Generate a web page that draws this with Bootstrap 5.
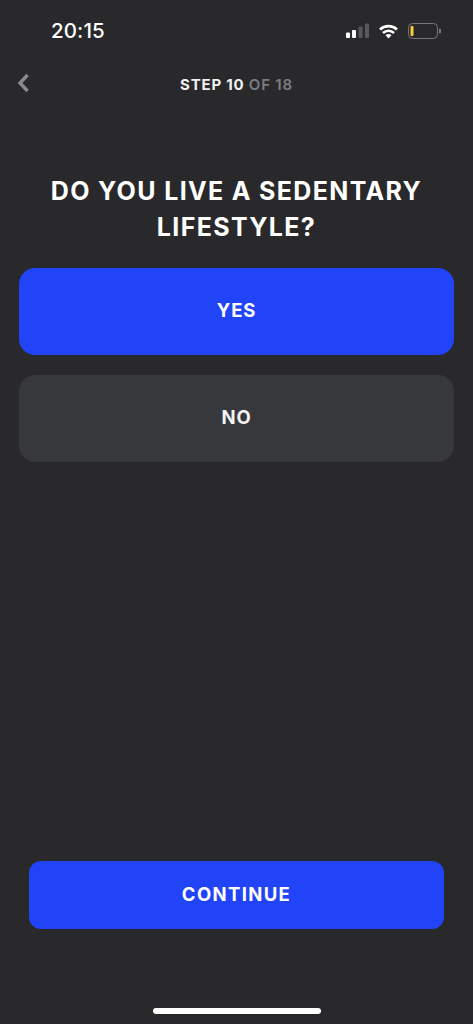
<!doctype html>
<html lang="en">
<head>
<meta charset="utf-8">
<title>Step 10</title>
<link href="https://cdn.jsdelivr.net/npm/bootstrap@5.3.0/dist/css/bootstrap.min.css" rel="stylesheet">
<style>
html,body{height:1024px;overflow:hidden}
body{background:#29292b;color:#fff;font-family:Inter,"Liberation Sans",sans-serif}
.screen{height:1024px}
.statusbar{height:62px;padding:0 32px 0 51px}
.clock{font-size:20.500px;font-weight:500;line-height:24px;margin-top:0;letter-spacing:.1px}
.status-icons{gap:10px;margin-top:0}
.topnav{height:44px;position:relative}
.back-link{position:absolute;left:17px;top:11px;line-height:0}
.step-label{font-size:15px;font-weight:700;letter-spacing:.8px;color:#f2f2f2;line-height:45px}
.step-label span{color:#7d7d80;font-weight:600}
.question{font-size:25px;font-weight:700;line-height:36px;letter-spacing:1.35px;margin:67px 0 23px;text-align:center;padding:0 20px;text-transform:uppercase}
.answers{padding:0 19px;gap:20px}
.answer{height:87px;border:0;border-radius:16px;color:#fff;font-size:18.500px;font-weight:700;letter-spacing:.8px;padding-bottom:7px}
.answer-on,.answer-on:hover,.answer-on:active{background:#2244f8;color:#fff}
.answer-off,.answer-off:hover{background:#37383c;color:#f4f4f4}
.footer-wrap{padding:0 29px;margin-top:auto}
.continue-btn,.continue-btn:hover{height:68px;background:#2244f8;color:#fff;border:0;border-radius:12px;font-size:18.500px;font-weight:700;letter-spacing:1.35px;padding-bottom:6px}
.home-wrap{height:95px;padding-bottom:10px}
.home-bar{width:168px;height:6px;border-radius:3px;background:#fff}
</style>
</head>
<body>
<div class="screen d-flex flex-column">
  <div class="statusbar d-flex justify-content-between align-items-center">
    <div class="clock">20:15</div>
    <div class="status-icons d-flex align-items-center">
      <svg width="23" height="16" viewBox="0 0 23 16" aria-hidden="true">
        <rect x="0" y="9.500" width="4" height="5.500" rx="1" fill="#fff"/>
        <rect x="6" y="7" width="4" height="8" rx="1" fill="#fff"/>
        <rect x="12.500" y="3.500" width="4" height="11.500" rx="1" fill="#58585a"/>
        <rect x="19" y="0.500" width="4" height="14.500" rx="1" fill="#58585a"/>
      </svg>
      <svg width="19" height="15" viewBox="0 0 19 15" aria-hidden="true" fill="none" stroke="#fff" stroke-width="2.600">
        <path d="M1 5.500a12.500 12.500 0 0 1 17 0"/>
        <path d="M4 9a8 8 0 0 1 11 0"/>
        <path d="M9.500 14.500l-3-3.200a4.200 4.200 0 0 1 6 0z" fill="#fff" stroke="none"/>
      </svg>
      <svg width="33" height="16" viewBox="0 0 33 16" aria-hidden="true">
        <rect x="0.500" y="0.500" width="29" height="15" rx="4" fill="none" stroke="#77777a"/>
        <rect x="2.500" y="3" width="3" height="10" rx="1" fill="#f5cf3a"/>
        <path d="M31 5.500a2.500 2.500 0 0 1 0 5z" fill="#77777a"/>
      </svg>
    </div>
  </div>
  <div class="topnav text-center">
    <a class="back-link" href="#" aria-label="Back">
      <svg width="13" height="20" viewBox="0 0 13 20" aria-hidden="true"><path d="M10.500 2L3 10l7.500 8" fill="none" stroke="#8a8a8d" stroke-width="3.400" stroke-linejoin="miter"/></svg>
    </a>
    <div class="step-label">STEP 10 <span>OF 18</span></div>
  </div>
  <h1 class="question">Do you live a sedentary lifestyle?</h1>
  <div class="answers d-grid">
    <button type="button" class="btn answer answer-on">YES</button>
    <button type="button" class="btn answer answer-off">NO</button>
  </div>
  <div class="footer-wrap d-grid">
    <button type="button" class="btn continue-btn">CONTINUE</button>
  </div>
  <div class="home-wrap d-flex justify-content-center align-items-end">
    <div class="home-bar"></div>
  </div>
</div>
<script src="https://cdn.jsdelivr.net/npm/bootstrap@5.3.0/dist/js/bootstrap.bundle.min.js"></script>
</body>
</html>
